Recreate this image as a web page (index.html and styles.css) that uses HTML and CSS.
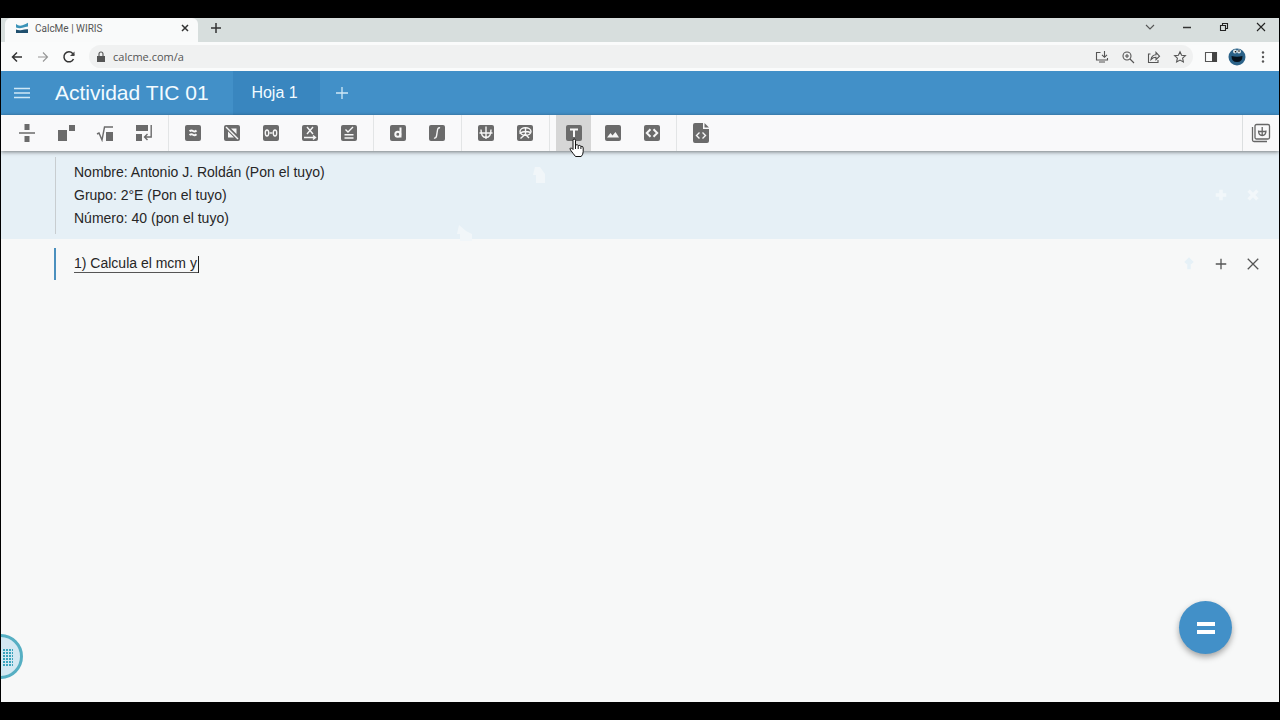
FILE: index.html
```html
<!DOCTYPE html>
<html lang="es">
<head>
    <meta charset="UTF-8">
    <meta name="viewport" content="width=device-width, initial-scale=1.0">
    <title>CalcMe | WIRIS</title>
    <link rel="stylesheet" href="styles.css">
</head>
<body>
    <div class="window">
        <div class="tabs">
            <div class="tab">
                <svg width="14" height="12" viewBox="0 0 14 12"><path d="M1 2q3 2.500 6.500 1.200T13 .8v3.700q-2.500.2-5.500 1.300T1 5.500z" fill="#3b93b8"/><path d="M1 7.500q3 1.200 6 .4t6-.6v3.700H1z" fill="#1f4f6e"/></svg>
                <span class="tab-title">CalcMe | WIRIS</span>
                <button class="plain tab-close" aria-label="Cerrar pestaña"><svg width="8" height="8" viewBox="0 0 8 8"><path d="M1 1l6 6M7 1L1 7" class="line bold"/></svg></button>
            </div>
            <button class="plain new-tab" aria-label="Nueva pestaña"><svg width="12" height="12" viewBox="0 0 12 12"><path d="M6 1v10M1 6h10" class="line bold"/></svg></button>
            <div class="controls">
                <button class="plain" aria-label="Buscar pestañas"><svg width="12" height="12" viewBox="0 0 12 12"><path d="M2 4l4 4 4-4" class="line"/></svg></button>
                <button class="plain" aria-label="Minimizar"><svg width="12" height="12" viewBox="0 0 12 12"><path d="M2 6.500h8" class="line bold"/></svg></button>
                <button class="plain" aria-label="Restaurar"><svg width="12" height="12" viewBox="0 0 12 12"><path d="M2.500 4.500h5v5h-5zM4.500 4.500v-2h5v5h-2" class="line dark"/></svg></button>
                <button class="plain" aria-label="Cerrar"><svg width="12" height="12" viewBox="0 0 12 12"><path d="M2 2l8 8M10 2l-8 8" class="line dark"/></svg></button>
            </div>
        </div>

        <div class="address">
            <button class="plain" aria-label="Atrás"><svg width="14" height="14" viewBox="0 0 14 14"><path d="M12 7H2.500M7 2.500L2.500 7 7 11.500" class="line bold"/></svg></button>
            <button class="plain off" aria-label="Adelante"><svg width="14" height="14" viewBox="0 0 14 14"><path d="M2 7h9.500M7 2.500L11.500 7 7 11.500" class="line"/></svg></button>
            <button class="plain" aria-label="Recargar"><svg width="14" height="14" viewBox="0 0 14 14"><path d="M11.500 9a5 5 0 1 1-.8-5.500L12 5" class="line bold"/><path d="M12.500 1.500v4.500H8z" fill="#444"/></svg></button>
            <div class="url">
                <svg width="10" height="12" viewBox="0 0 10 12"><path d="M1 5h8v6H1z" fill="#555"/><path d="M3 5V3a2 2 0 0 1 4 0v2" class="line"/></svg>
                <input type="text" aria-label="Dirección" value="calcme.com/a">
                <button class="plain" aria-label="Instalar"><svg width="14" height="14" viewBox="0 0 14 14"><path d="M5.500 2.500h-4v7.500h11V8M4 12h6M9.500 1v6M7 4.800l2.500 2.500L12 4.800" class="line"/></svg></button>
                <button class="plain" aria-label="Zoom"><svg width="14" height="14" viewBox="0 0 14 14"><path d="M9 9l4 4M6 4v4M4 6h4" class="line"/><circle cx="6" cy="6" r="4" class="line"/></svg></button>
                <button class="plain" aria-label="Compartir"><svg width="14" height="14" viewBox="0 0 14 14"><path d="M3.500 4h-2v8.500h9.500V10M4 9.500c.5-3 2-4.500 5-4.700V2.500l3.500 3.700L9 9.700V7.300c-2 0-3.500.6-5 2.200z" class="line"/></svg></button>
                <button class="plain" aria-label="Favoritos"><svg width="14" height="14" viewBox="0 0 14 14"><path d="M7 1.800l1.600 3.500 3.800.4-2.800 2.500.8 3.800L7 10.100 3.600 12l.8-3.800-2.800-2.500 3.800-.4z" class="line"/></svg></button>
            </div>
            <button class="plain" aria-label="Panel lateral"><svg width="14" height="14" viewBox="0 0 14 14"><path d="M1.500 2.500h11v9h-11z" class="line"/><path d="M8 2h5v10H8z" fill="#444"/></svg></button>
            <button class="plain" aria-label="Perfil"><svg width="18" height="18" viewBox="0 0 18 18"><circle cx="9" cy="9" r="8.500" fill="#2b6288"/><circle cx="7" cy="3.500" r="2" fill="#dde6ea"/><circle cx="11" cy="3.500" r="2" fill="#dde6ea"/><circle cx="7.500" cy="3.800" r=".8"/><circle cx="11" cy="3" r=".8"/><path d="M3.500 8q5.500 1.500 11 0 0 6-5.500 6t-5.500-6z" fill="#07121c"/></svg></button>
            <button class="plain" aria-label="Menú"><svg width="14" height="14" viewBox="0 0 14 14" fill="#555"><circle cx="7" cy="2.500" r="1.200"/><circle cx="7" cy="7" r="1.200"/><circle cx="7" cy="11.500" r="1.200"/></svg></button>
        </div>

        <header class="header">
            <button class="plain menu" aria-label="Menú principal"><svg width="16" height="12" viewBox="0 0 16 12"><path d="M0 1.500h16M0 6h16M0 10.500h16" stroke="#cfe8f6" stroke-width="1.300"/></svg></button>
            <h1>Actividad TIC 01</h1>
            <button class="plain sheet-tab">Hoja 1</button>
            <button class="plain add-sheet" aria-label="Añadir hoja"><svg width="12" height="12" viewBox="0 0 12 12"><path d="M6 0v12M0 6h12" stroke="#cfe8f6" stroke-width="1.300"/></svg></button>
        </header>

        <div class="toolbar">
            <div class="group">
                <button class="plain tool" aria-label="Fracción"><svg width="18" height="18" viewBox="0 0 18 18"><path d="M6.500 0h5v6h-5zM1 8.200h16v1.600H1zM6.500 12h5v6h-5z"/></svg></button>
                <button class="plain tool" aria-label="Potencia"><svg width="18" height="18" viewBox="0 0 18 18"><path d="M1 6h9v11H1zM12 1h6v6h-6z"/></svg></button>
                <button class="plain tool" aria-label="Raíz"><svg width="18" height="18" viewBox="0 0 18 18"><path d="M10 8h7v9h-7z"/><path d="M1 10l2-1 3 7L8.500 3H17" fill="none" stroke="#6b6b6b" stroke-width="1.400"/></svg></button>
                <button class="plain tool" aria-label="Nueva línea"><svg width="18" height="18" viewBox="0 0 18 18"><path d="M1 1h12v6H1zM1 10h6v7H1z"/><path d="M16.200 1v12H9.500M12.500 10l-3 3 3 3" fill="none" stroke="#6b6b6b" stroke-width="1.400"/></svg></button>
            </div>
            <div class="group">
                <button class="plain tool" aria-label="Aproximado"><svg width="18" height="18" viewBox="0 0 18 18"><rect x="1" y="1" width="16" height="16" rx="2"/><path d="M5.500 7.300q1.800-1.500 3.500-.3t3.500-.5M5.500 11q1.800-1.500 3.500-.3t3.500-.5" class="in thick"/></svg></button>
                <button class="plain tool" aria-label="Simplificar"><svg width="18" height="18" viewBox="0 0 18 18"><rect x="1" y="1" width="16" height="16" rx="2"/><path d="M3 3l12 12" class="in"/><path d="M8 4.500h5.500V10zM5 7.500l6 6H5z" fill="#f7f7f7"/></svg></button>
                <button class="plain tool" aria-label="Factorizar"><svg width="18" height="18" viewBox="0 0 18 18"><rect x="1" y="1" width="16" height="16" rx="2"/><path d="M7.500 9h3" class="in"/><ellipse cx="5" cy="9" rx="1.700" ry="3" class="in"/><ellipse cx="13" cy="9" rx="1.700" ry="3" class="in"/></svg></button>
                <button class="plain tool" aria-label="Variable"><svg width="18" height="18" viewBox="0 0 18 18"><rect x="1" y="1" width="16" height="16" rx="2"/><path d="M6 3l6 7M12 3l-6 7M3 13.500h11M12 11.500l2.500 2-2.500 2" class="in"/></svg></button>
                <button class="plain tool" aria-label="Comprobar"><svg width="18" height="18" viewBox="0 0 18 18"><rect x="1" y="1" width="16" height="16" rx="2"/><path d="M5.500 5.500L8 8l5-5M4.500 10.800h9M4.500 14h9" class="in"/></svg></button>
            </div>
            <div class="group">
                <button class="plain tool" aria-label="Derivada"><svg width="18" height="18" viewBox="0 0 18 18"><rect x="1" y="1" width="16" height="16" rx="2"/><path d="M11.500 3.500v10" class="in thick"/><circle cx="8.800" cy="10.300" r="2.500" class="in thick"/></svg></button>
                <button class="plain tool" aria-label="Integral"><svg width="18" height="18" viewBox="0 0 18 18"><rect x="1" y="1" width="16" height="16" rx="2"/><path d="M12 4q-2-.8-2.500 2L8.500 12q-.5 2.500-2.500 2" class="in"/></svg></button>
            </div>
            <div class="group">
                <button class="plain tool" aria-label="Gráfica"><svg width="18" height="18" viewBox="0 0 18 18"><rect x="1" y="1" width="16" height="16" rx="2"/><path d="M9 2.500V15M2.500 9h13M4 5.500q0 8 5 8t5-8" class="in"/></svg></button>
                <button class="plain tool" aria-label="Gráfica 3D"><svg width="18" height="18" viewBox="0 0 18 18"><rect x="1" y="1" width="16" height="16" rx="2"/><path d="M9.500 3v8M3.500 9.500q5-3.500 11-1M9 10.500l-4.500 4M9.500 10.500l3.500 3.500" class="in"/><ellipse cx="9.500" cy="7.500" rx="5.500" ry="3.800" class="in"/></svg></button>
            </div>
            <div class="group">
                <button class="plain tool active" aria-label="Texto"><svg width="18" height="18" viewBox="0 0 18 18"><rect x="1" y="1" width="16" height="16" rx="2"/><path d="M5 5.500h8M9 5.500V13" class="in thick"/></svg><svg class="pointer" width="18" height="20" viewBox="0 0 18 20"><path d="M5 11V2.500q0-1.500 1.200-1.500T7.500 2.500V7q2-.8 2.700.5 2-.6 2.700.8 2.300-.4 2.300 1.700v3.500q0 3-2 5H7.500Q5.500 16 2.500 12q-1-1.500 0-2t2.500 1.500z" fill="#fff" stroke="#111"/><path d="M7.500 7v4M10.200 8v3M12.900 8.500V11" fill="none" stroke="#111"/></svg></button>
                <button class="plain tool" aria-label="Imagen"><svg width="18" height="18" viewBox="0 0 18 18"><rect x="1" y="1" width="16" height="16" rx="2"/><path d="M3 13.500L6.500 9l2 2.500L11.500 8l3.500 5.500z" fill="#f7f7f7"/></svg></button>
                <button class="plain tool" aria-label="Código"><svg width="18" height="18" viewBox="0 0 18 18"><rect x="1" y="1" width="16" height="16" rx="2"/><path d="M7.500 5.300L3.800 9l3.700 3.700M10.500 5.300L14.200 9l-3.700 3.700" class="in thick"/></svg></button>
            </div>
            <div class="group last">
                <button class="plain tool" aria-label="Archivo de código"><svg width="18" height="22" viewBox="0 0 18 22"><path d="M3 1h8v6h6v12q0 2-2 2H3q-2 0-2-2V3q0-2 2-2zM12.500 1L17 5.500h-4.500z"/><path d="M7.500 10.500l-3 3 3 3M10.500 10.500l3 3-3 3" class="in"/></svg></button>
            </div>
            <button class="plain export" aria-label="Exportar"><svg width="20" height="20" viewBox="0 0 20 20" fill="none" stroke="#666" stroke-width="1.300"><rect x="4" y="1.500" width="14.500" height="14.500" rx="1.500"/><path d="M1.500 4v13q0 1.500 1.500 1.500h13M11.200 4v9M7 8.500h8.500M7.500 7.500q0 5 3.700 5t3.800-5"/></svg></button>
        </div>

        <main class="sheet">
            <section class="block selected">
                <div class="content">
                    <p>Nombre: Antonio J. Roldán (Pon el tuyo)</p>
                    <p>Grupo: 2°E (Pon el tuyo)</p>
                    <p>Número: 40 (pon el tuyo)</p>
                </div>
                <div class="actions faded">
                    <button class="plain" aria-label="Añadir"><svg width="16" height="16" viewBox="0 0 16 16"><path d="M8 2v12M2 8h12"/></svg></button>
                    <button class="plain" aria-label="Eliminar"><svg width="16" height="16" viewBox="0 0 16 16"><path d="M3 3l10 10M13 3L3 13"/></svg></button>
                </div>
                <svg class="trail trail-a" width="12" height="16" viewBox="0 0 12 16"><path d="M2 0h5l5 7v9H3V8H0z"/></svg>
                <svg class="trail trail-b" width="15" height="18" viewBox="0 0 15 18"><path d="M2 0l7 6 6 3v7H3V9H0z"/></svg>
            </section>
            <section class="block editing">
                <div class="content">
                    <input type="text" aria-label="Texto" value="1) Calcula el mcm y"><span class="caret"></span>
                </div>
                <div class="actions">
                    <button class="plain ghost" aria-label="Subir"><svg width="16" height="16" viewBox="0 0 16 16"><path d="M8 14V5M4 7l4-4 4 4"/></svg></button>
                    <button class="plain" aria-label="Añadir"><svg width="16" height="16" viewBox="0 0 16 16"><path d="M8 2v12M2 8h12"/></svg></button>
                    <button class="plain" aria-label="Eliminar"><svg width="16" height="16" viewBox="0 0 16 16"><path d="M2 2l12 12M14 2L2 14"/></svg></button>
                </div>
            </section>
            <button class="plain keypad" aria-label="Teclado"><svg width="10" height="20" viewBox="0 0 10 20"><path d="M1 2v17M4 2v17M7 2v17M10 2v17" stroke="#3aa3bd" stroke-width="2" stroke-dasharray="2 1"/></svg></button>
            <button class="plain equals" aria-label="Calcular"><svg width="18" height="12" viewBox="0 0 18 12"><path d="M0 0h18v4H0zM0 8h18v4H0z" fill="#fff"/></svg></button>
        </main>
    </div>
</body>
</html>
```

FILE: styles.css
```css
*{
    margin: 0;
    padding: 0;
    box-sizing: border-box;
}
body{
    background: #000;
    font-family: "Liberation Sans", Arial, sans-serif;
}
.window{
    display: flex;
    flex-direction: column;
    height: 100vh;
    border: solid #000;
    border-width: 18px 1px;
    background: #f7f8f8;
    overflow: hidden;
}
.plain{
    display: flex;
    align-items: center;
    justify-content: center;
    flex-shrink: 0;
    border: none;
    background: none;
    color: inherit;
    font: inherit;
    cursor: pointer;
}
.line{
    fill: none;
    stroke: #555;
    stroke-width: 1.1;
}
.bold{
    stroke: #333;
    stroke-width: 1.5;
}
.dark{
    stroke: #222;
}

/* browser bars */
.tabs{
    display: flex;
    height: 24px;
    background: #d7dedd;
}
.tab{
    display: flex;
    align-items: center;
    gap: 6px;
    width: 193px;
    margin-left: 4px;
    padding: 0 8px 4px 10px;
    background: #f9fafa;
    border-radius: 6px 6px 0 0;
}
.tab-title{
    flex: 1;
    font: 10px Roboto, sans-serif;
    color: #555;
}
.tab-close{
    width: 10px;
}
.new-tab{
    width: 28px;
    margin-left: 4px;
    padding-bottom: 4px;
}
.controls{
    display: flex;
    margin-left: auto;
    padding-bottom: 7px;
}
.controls .plain{
    width: 37px;
}
.address{
    display: flex;
    align-items: center;
    height: 29px;
    padding: 0 3px;
    background: #fafbfb;
}
.address .plain{
    width: 26px;
}
.off{
    opacity: 0.6;
}
.url{
    display: flex;
    flex: 1;
    align-items: center;
    height: 23px;
    margin: 0 5px 0 7px;
    padding-left: 7px;
    background: #f0f1f1;
    border-radius: 12px;
}
.url input{
    flex: 1;
    min-width: 0;
    margin-left: 7px;
    border: none;
    outline: none;
    background: none;
    font: 11px "Open Sans", sans-serif;
    color: #555;
}

/* app header */
.header{
    display: flex;
    height: 44px;
    background: #4290c8;
    color: #f2fbff;
}
.menu{
    width: 42px;
}
h1{
    align-self: center;
    width: 178px;
    margin-left: 12px;
    font-size: 21px;
    font-weight: normal;
    white-space: nowrap;
}
.sheet-tab{
    width: 87px;
    padding-right: 4px;
    background: #3986bf;
    font-size: 16px;
}
.add-sheet{
    width: 43px;
}

/* toolbar */
.toolbar{
    position: relative;
    z-index: 1;
    display: flex;
    height: 36px;
    padding-left: 1px;
    background: #f9f9fa;
    box-shadow: 0 1px 4px rgba(0, 0, 0, 0.5);
}
.group{
    display: flex;
    gap: 4px;
    padding: 0 7px;
    margin-right: -1px;
    border-right: 1px solid #e3e5e6;
}
.last{
    border: none;
}
.tool{
    position: relative;
    width: 35px;
    fill: #6b6b6b;
}
.active{
    background: #d6d6d6;
}
.in{
    fill: none;
    stroke: #f7f7f7;
    stroke-width: 1.4;
}
.thick{
    stroke-width: 2;
}
.pointer{
    position: absolute;
    left: 12px;
    top: 23px;
}
.export{
    width: 37px;
    margin-left: auto;
    border-left: 1px solid #dcdfe0;
}

/* sheet */
.sheet{
    position: relative;
    flex: 1;
    font-size: 14px;
    line-height: 23px;
    color: #262626;
}
.block{
    position: relative;
    display: flex;
    align-items: center;
    justify-content: space-between;
    padding: 5px 10px 5px 54px;
}
.selected{
    height: 88px;
    background: #e6f0f6;
}
.selected .content{
    padding: 4px 0 4px 18px;
    border-left: 1px solid #c8cdd0;
}
.editing{
    padding-top: 9px;
    padding-left: 53px;
}
.editing .content{
    display: flex;
    align-items: center;
    height: 32px;
    padding-left: 18px;
    border-left: 2px solid #4b90be;
}
.editing input{
    width: 124px;
    height: 17px;
    border: none;
    border-bottom: 1px solid #555;
    outline: none;
    background: none;
    font: inherit;
    color: inherit;
}
.caret{
    width: 1px;
    height: 17px;
    background: #222;
}
.actions{
    display: flex;
}
.actions .plain{
    width: 32px;
}
.actions svg{
    width: 14px;
    fill: none;
    stroke: #555;
    stroke-width: 1.5;
}
.faded svg{
    stroke: #f2f7fa;
    stroke-width: 4;
}
.ghost svg{
    stroke: #e6f1f7;
    stroke-width: 4;
}
.trail{
    position: absolute;
    fill: #f1f6f9;
}
.trail-a{
    left: 532px;
    top: 16px;
}
.trail-b{
    left: 456px;
    top: 74px;
}
.keypad{
    position: absolute;
    left: -23px;
    bottom: 23px;
    width: 45px;
    height: 45px;
    padding-left: 14px;
    border: 3px solid #56afc3;
    border-radius: 50%;
    background: #d3e8f2;
}
.equals{
    position: absolute;
    right: 47px;
    bottom: 48px;
    width: 53px;
    height: 53px;
    border-radius: 50%;
    background: #4290c8;
    box-shadow: 0 3px 6px rgba(0, 0, 0, 0.35);
}
```
